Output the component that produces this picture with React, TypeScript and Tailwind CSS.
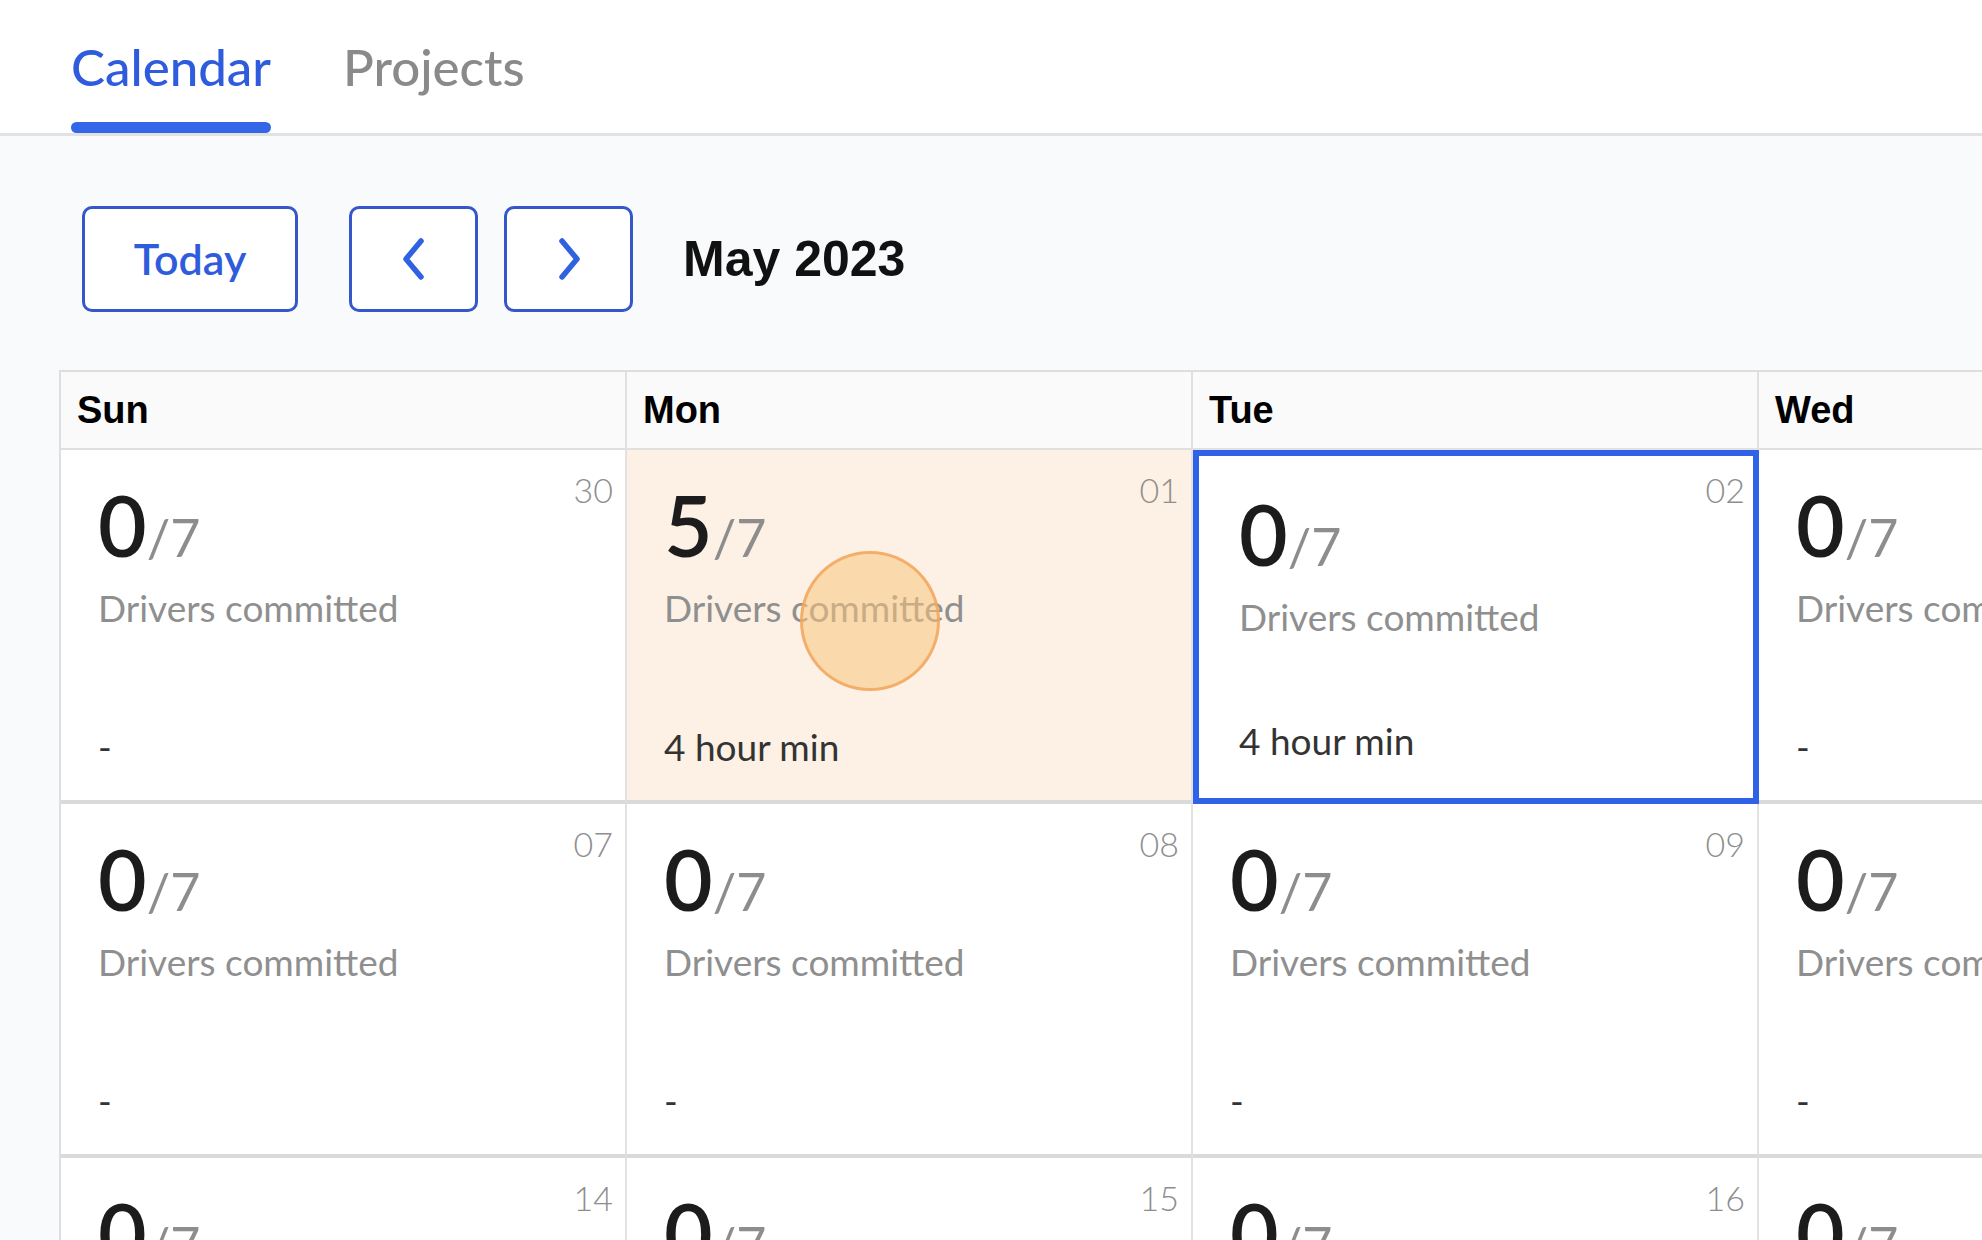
import React from "react";
import clsx from "clsx";

type Day = {
  date: string;
  count?: number;
  min?: boolean;
  hover?: boolean;
  selected?: boolean;
};

const DAYS = ["Sun", "Mon", "Tue", "Wed", "Thu", "Fri", "Sat"];

const WEEKS: Day[][] = [
  [
    { date: "30" },
    { date: "01", count: 5, min: true, hover: true },
    { date: "02", min: true, selected: true },
    { date: "03" },
    { date: "04" },
    { date: "05" },
    { date: "06" },
  ],
  ["07", "08", "09", "10", "11", "12", "13"].map((d) => ({ date: d })),
  ["14", "15", "16", "17", "18", "19", "20"].map((d) => ({ date: d })),
];

function Chevron({ dir }: { dir: "left" | "right" }) {
  return (
    <svg width="26" height="44" viewBox="0 0 26 44" fill="none">
      <polyline
        points={dir === "left" ? "20,4 5,22 20,40" : "6,4 21,22 6,40"}
        stroke="#2f62e0"
        strokeWidth="5.5"
        strokeLinecap="round"
        strokeLinejoin="round"
      />
    </svg>
  );
}

function Cell({ day }: { day: Day }) {
  return (
    <div
      className={clsx(
        "relative flex h-[354px] flex-col justify-between font-['Lato',sans-serif]",
        day.selected
          ? "border-[6px] border-[#2f62e6] pt-[36px] pl-[40px] pb-[39px]"
          : "border-r-2 border-b-4 border-r-[#e2e2e2] border-b-[#dadada] pt-[33px] pl-[37px] pb-[35px]",
        day.hover ? "bg-[#fcf1e4]" : "bg-white"
      )}
    >
      <span
        className={clsx(
          "absolute text-[34px] font-light leading-none text-[#8e8e8e]",
          day.selected ? "top-[17px] right-[8px]" : "top-[23px] right-[12px]"
        )}
      >
        {day.date}
      </span>
      <div>
        <div className="flex items-baseline leading-none">
          <span className="text-[84px] font-semibold text-[#1c1c1c]">{day.count ?? 0}</span>
          <span className="text-[52px] text-[#8d8d8d]">/7</span>
        </div>
        <div className="mt-[22px] text-[37px] leading-none text-[#8f8f8f]">Drivers committed</div>
      </div>
      <div className="text-[37px] leading-none text-[#333]">{day.min ? "4 hour min" : "-"}</div>
      {day.hover && (
        <div className="absolute top-[101px] left-[173px] h-[140px] w-[140px] rounded-full border-[3px] border-[#f2a457]/80 bg-[#f7c57f]/55" />
      )}
    </div>
  );
}

export default function App() {
  return (
    <div className="h-[1240px] w-full overflow-hidden bg-[#f9fafb]">
      <div className="flex gap-[72px] border-b-[3px] border-[#e2e2e2] bg-white pt-[41px] pl-[71px] font-['Lato',sans-serif] text-[51px] font-medium leading-none">
        <div className="flex flex-col">
          <span className="text-[#2f5cdc]">Calendar</span>
          <div className="mt-[30px] h-[11px] rounded-full bg-[#3467e8]" />
        </div>
        <span className="text-[#8a8a8a]">Projects</span>
      </div>

      <div className="pt-[70px] pl-[59px]">
        <div className="ml-[23px] flex items-center">
          <button className="flex h-[106px] w-[216px] items-center justify-center rounded-[10px] border-[3px] border-[#3656cc] bg-white font-['Lato',sans-serif] text-[43px] font-semibold text-[#2f5cdc]">
            Today
          </button>
          <button className="ml-[51px] flex h-[106px] w-[129px] items-center justify-center rounded-[10px] border-[3px] border-[#3656cc] bg-white">
            <Chevron dir="left" />
          </button>
          <button className="ml-[26px] flex h-[106px] w-[129px] items-center justify-center rounded-[10px] border-[3px] border-[#3656cc] bg-white">
            <Chevron dir="right" />
          </button>
          <span className="ml-[50px] font-['Liberation_Sans',Arial,sans-serif] text-[50px] font-bold text-[#111]">
            May 2023
          </span>
        </div>

        <div className="mt-[58px] grid w-max grid-cols-[repeat(7,566px)] border-t-2 border-l-2 border-[#dedede]">
          {DAYS.map((d) => (
            <div
              key={d}
              className="flex h-[78px] items-center border-r-2 border-b-2 border-[#e0e0e0] bg-[#fafafb] pl-[16px] font-['Liberation_Sans',Arial,sans-serif] text-[38px] font-bold text-black"
            >
              {d}
            </div>
          ))}
          {WEEKS.flat().map((day, i) => (
            <Cell key={i} day={day} />
          ))}
        </div>
      </div>
    </div>
  );
}
